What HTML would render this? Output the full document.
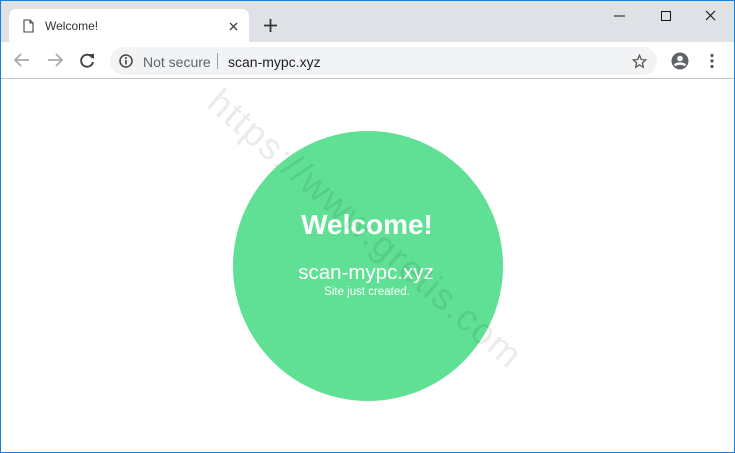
<!DOCTYPE html>
<html><head><style>
*{margin:0;padding:0;box-sizing:border-box}
body{width:735px;height:453px;overflow:hidden;background:#fff;font-family:"Liberation Sans",Arial,sans-serif;position:relative}
.frame{position:absolute;inset:0;border:1px solid #1a7fd6;pointer-events:none;z-index:10}
.strip{position:absolute;left:0;top:0;width:735px;height:42px;background:#dee1e6}
.tab{position:absolute;left:9px;top:9px;width:240px;height:33px;background:#fff;border-radius:7px 7px 0 0}
.tab .t{position:absolute;left:36px;top:10px;font-size:12px;color:#333}
.tb{position:absolute;left:0;top:42px;width:735px;height:37px;background:#fff;border-bottom:1px solid #c4c4c4}
.omni{position:absolute;left:110px;top:5px;width:547px;height:28px;background:#f1f3f4;border-radius:14px}
.omni .ns{position:absolute;left:33px;top:7px;font-size:14px;color:#5f6368}
.omni .sep{position:absolute;left:107px;top:6px;width:1px;height:16px;background:#9aa0a6}
.omni .url{position:absolute;left:118px;top:7px;font-size:14px;color:#202124}
.circle{position:absolute;left:233px;top:131px;width:270px;height:270px;border-radius:50%;background:#5fe094;color:#fff;text-align:center}
.h{position:absolute;left:0;right:2px;top:78px;font-size:28px;font-weight:bold}
.d{position:absolute;left:0;right:4px;top:130px;font-size:20.5px}
.s{position:absolute;left:0;right:2px;top:155px;font-size:11.5px}
.wm{position:absolute;left:115px;top:208px;width:500px;text-align:center;font-size:37px;color:rgba(0,0,0,0.08);transform:rotate(41deg);transform-origin:center;white-space:nowrap;letter-spacing:1.5px}
</style></head><body>
<div class="strip">
<div class="tab">
<svg style="position:absolute;left:14px;top:10px" width="11" height="14" viewBox="0 0 11 14"><path d="M1 1h6l3 3v9H1z M7 1v3h3" fill="none" stroke="#444" stroke-width="1.1"/></svg>
<span class="t">Welcome!</span>
<svg style="position:absolute;left:220px;top:13px" width="9" height="9"><path d="M1 1l7 7M8 1L1 8" stroke="#444" stroke-width="1.4"/></svg>
</div>
<svg style="position:absolute;left:264px;top:19px" width="13" height="13"><path d="M6.5 0v13M0 6.5h13" stroke="#333" stroke-width="1.8"/></svg>
<svg style="position:absolute;left:614px;top:10px" width="110" height="12"><path d="M0 6h11" stroke="#111"/><rect x="47.5" y="1.5" width="9" height="9" fill="none" stroke="#111"/><path d="M92 1l9 9M101 1l-9 9" stroke="#111" stroke-width="1.1"/></svg>
</div>
<div class="tb">
<svg style="position:absolute;left:14px;top:11px" width="16" height="14"><path d="M15 7H2M7 1L1 7l6 6" fill="none" stroke="#aaa" stroke-width="1.8"/></svg>
<svg style="position:absolute;left:47px;top:11px" width="16" height="14"><path d="M1 7h13M9 1l6 6-6 6" fill="none" stroke="#aaa" stroke-width="1.8"/></svg>
<svg style="position:absolute;left:80px;top:11px" width="15" height="15" viewBox="0 0 15 15"><path d="M12.5 5A6 6 0 1 0 13 9" fill="none" stroke="#444" stroke-width="1.9"/><path d="M9 1h5v5z" fill="#444"/></svg>
<div class="omni">
<svg style="position:absolute;left:9px;top:7px" width="14" height="14"><circle cx="7" cy="7" r="6" fill="none" stroke="#444" stroke-width="1.5"/><path d="M7 6v4.5" stroke="#444" stroke-width="1.6"/><circle cx="7" cy="4" r="1" fill="#444"/></svg>
<span class="ns">Not secure</span><span class="sep"></span><span class="url">scan-mypc.xyz</span>
<svg style="position:absolute;left:522px;top:7px" width="15" height="15" viewBox="0 0 24 24"><path d="M12 2l2.9 6.9 7.1.6-5.4 4.7 1.6 7-6.2-3.8-6.2 3.8 1.6-7L2 9.5l7.1-.6z" fill="none" stroke="#555" stroke-width="2"/></svg>
</div>
<svg style="position:absolute;left:671px;top:10px" width="18" height="18"><circle cx="9" cy="9" r="8.5" fill="#5f6368"/><circle cx="9" cy="6.5" r="2.8" fill="#fff"/><path d="M3.8 13.5c1.5-2.5 8.9-2.5 10.4 0" stroke="#fff" stroke-width="2.4" fill="none"/></svg>
<svg style="position:absolute;left:709px;top:11px" width="6" height="16"><circle cx="3" cy="2.5" r="1.6" fill="#555"/><circle cx="3" cy="8" r="1.6" fill="#555"/><circle cx="3" cy="13.5" r="1.6" fill="#555"/></svg>
</div>
<div class="circle"><div class="h">Welcome!</div><div class="d">scan-mypc.xyz</div><div class="s">Site just created.</div></div>
<div class="wm">https://www.gretis.com</div>
<div class="frame"></div>
</body></html>
